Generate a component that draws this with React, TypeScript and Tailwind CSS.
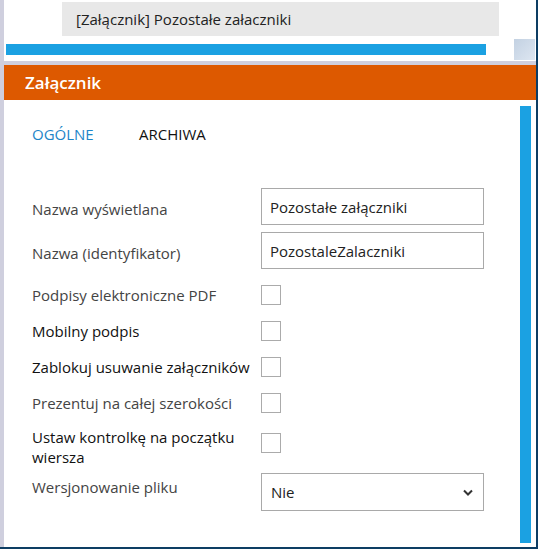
import React from "react";

const font = { fontFamily: '"Open Sans", "Noto Sans", sans-serif' };

function Checkbox() {
  return <div className="w-[20px] h-[20px] border border-[#ababab] bg-white" />;
}

export default function App() {
  return (
    <div
      className="w-[538px] h-[549px] flex bg-white border-r-2 border-b-2 border-[#0d3d63] overflow-hidden"
      style={font}
    >
      <div className="w-[4px] shrink-0 bg-[#cfcfde]" />
      <div className="flex-1 flex flex-col min-w-0">
        {/* top area */}
        <div className="h-[61px] flex flex-col shrink-0">
          <div className="ml-[58px] mt-[2px] w-[437px] h-[34px] bg-[#e8e8e8] flex items-center pl-[14px] text-[15px] text-[#222]">
            [Załącznik] Pozostałe załaczniki
          </div>
          <div className="mt-[3px] h-[21px] flex">
            <div className="ml-[2px] mt-[5px] w-[480px] h-[11px] bg-[#1ba1e2]" />
            <div className="ml-auto mr-[1px] w-[21px] h-[21px] bg-gradient-to-br from-[#c3d1e2] to-[#dde6f1]" />
          </div>
        </div>
        <div className="h-[4px] shrink-0 bg-[#cfcfde]" />
        <div className="h-[35px] shrink-0 bg-[#dd5900] flex items-center pl-[21px] text-white text-[17px] font-semibold">
          Załącznik
        </div>
        {/* content */}
        <div className="flex-1 flex min-h-0">
          <div className="flex-1 pl-[28px]">
            <div className="mt-[24px] flex text-[15px] leading-[20px] uppercase">
              <div className="w-[107px] text-[#1d85c8]">Ogólne</div>
              <div className="text-[#111]">Archiwa</div>
            </div>
            <div className="mt-[44px] flex flex-col text-[15px] leading-[20px]">
              <div className="flex">
                <div className="w-[229px] pt-[11px] text-[#444]">Nazwa wyświetlana</div>
                <div className="w-[223px] h-[37px] border border-[#a9a9a9] flex items-center pl-[8px] text-[#222]">
                  Pozostałe załączniki
                </div>
              </div>
              <div className="flex mt-[7px]">
                <div className="w-[229px] pt-[11px] text-[#444]">Nazwa (identyfikator)</div>
                <div className="w-[223px] h-[37px] border border-[#a9a9a9] flex items-center pl-[8px] text-[#222]">
                  PozostaleZalaczniki
                </div>
              </div>
              <div className="flex mt-[16px]">
                <div className="w-[229px] text-[#444]">Podpisy elektroniczne PDF</div>
                <Checkbox />
              </div>
              <div className="flex mt-[16px]">
                <div className="w-[229px] text-[#111]">Mobilny podpis</div>
                <Checkbox />
              </div>
              <div className="flex mt-[16px]">
                <div className="w-[229px] text-[#111] whitespace-nowrap">Zablokuj usuwanie załączników</div>
                <Checkbox />
              </div>
              <div className="flex mt-[16px]">
                <div className="w-[229px] text-[#444]">Prezentuj na całej szerokości</div>
                <Checkbox />
              </div>
              <div className="flex mt-[14px]">
                <div className="w-[229px] pr-[12px] text-[#111]">Ustaw kontrolkę na początku wiersza</div>
                <div className="mt-[6px]">
                  <Checkbox />
                </div>
              </div>
              <div className="flex mt-[6px]">
                <div className="w-[229px] pt-[4px] text-[#444]">Wersjonowanie pliku</div>
                <div className="w-[223px] h-[38px] border border-[#a9a9a9] flex items-center pl-[9px] pr-[10px] text-[#222]">
                  <span className="flex-1">Nie</span>
                  <svg width="10" height="7" viewBox="0 0 10 7">
                    <path d="M1 1.5 L5 5.5 L9 1.5" fill="none" stroke="#333" strokeWidth="2" />
                  </svg>
                </div>
              </div>
            </div>
          </div>
          <div className="w-[11px] shrink-0 mt-[6px] mb-[4px] mr-[5px] bg-[#1ba1e2]" />
        </div>
      </div>
    </div>
  );
}
